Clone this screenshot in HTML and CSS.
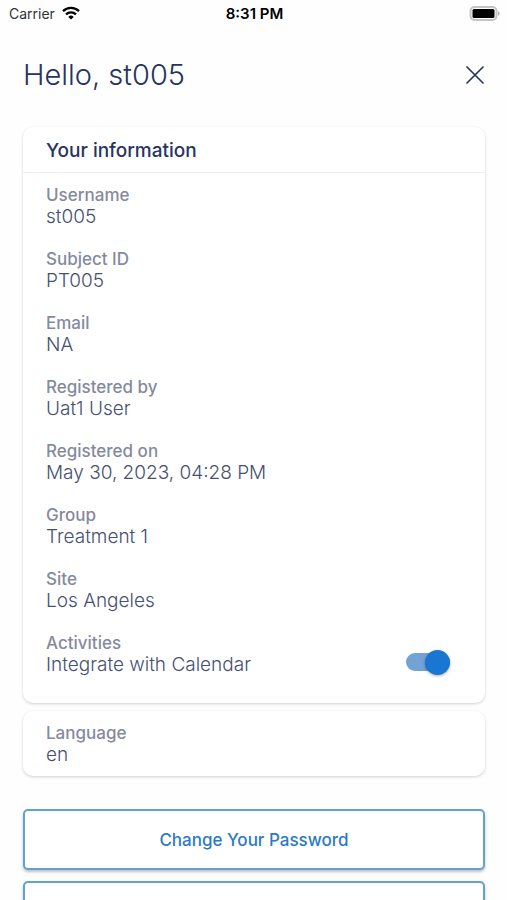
FILE: index.html
```html
<!DOCTYPE html>
<html lang="en">
<head>
  <meta charset="UTF-8">
  <meta name="viewport" content="width=device-width, initial-scale=1.0">
  <title>Profile</title>
  <link rel="stylesheet" href="styles.css">
</head>
<body>
  <div class="status-bar">
    <div class="carrier">
      <span>Carrier</span>
      <svg width="18" height="14" viewBox="0 0 18 14" fill="none" stroke="#000" stroke-width="2.4">
        <path d="M1 5.2a11.4 11.4 0 0 1 16 0"/>
        <path d="M4 8.4a7.2 7.2 0 0 1 10 0"/>
        <path d="M9 13.6 6.3 10.9a3.9 3.9 0 0 1 5.4 0z" fill="#000" stroke="none"/>
      </svg>
    </div>
    <div class="time">8:31 PM</div>
    <div class="battery">
      <svg width="31" height="15" viewBox="0 0 31 15">
        <rect x="1.5" y="1" width="26" height="13" rx="4" fill="#fff" stroke="#c4c4c4" stroke-width="2"/>
        <rect x="3.5" y="3" width="22" height="9" rx="1.5" fill="#000"/>
        <path d="M29 5.2c2.2.8 2.2 3.8 0 4.6z" fill="#b5b5b5"/>
      </svg>
    </div>
  </div>

  <header class="page-header">
    <h1>Hello, st005</h1>
    <button class="close" type="button" aria-label="Close">
      <svg width="20" height="20" viewBox="0 0 20 20" fill="none" stroke="#27345f" stroke-width="1.7" stroke-linecap="round">
        <path d="M2 2l16 16M18 2L2 18"/>
      </svg>
    </button>
  </header>

  <main class="content">
    <section class="card">
      <h2>Your information</h2>
      <dl class="info">
        <div class="item"><dt>Username</dt><dd>st005</dd></div>
        <div class="item"><dt>Subject ID</dt><dd>PT005</dd></div>
        <div class="item"><dt>Email</dt><dd>NA</dd></div>
        <div class="item"><dt>Registered by</dt><dd>Uat1 User</dd></div>
        <div class="item"><dt>Registered on</dt><dd>May 30, 2023, 04:28 PM</dd></div>
        <div class="item"><dt>Group</dt><dd>Treatment 1</dd></div>
        <div class="item"><dt>Site</dt><dd>Los Angeles</dd></div>
        <div class="item item-toggle">
          <dt>Activities</dt>
          <dd>
            <label for="calendar">Integrate with Calendar</label>
            <input class="toggle" type="checkbox" role="switch" id="calendar" checked>
          </dd>
        </div>
      </dl>
    </section>

    <section class="card">
      <dl class="info language">
        <div class="item"><dt>Language</dt><dd>en</dd></div>
      </dl>
    </section>

    <div class="actions">
      <button class="btn" type="button">Change Your Password</button>
      <button class="btn" type="button" aria-label="Log Out"></button>
    </div>
  </main>
</body>
</html>
```

FILE: styles.css
```css
* {
  box-sizing: border-box;
}

body {
  margin: 0;
  height: 100vh;
  overflow: hidden;
  background-color: #fefefe;
  color: #27345f;
  font-family: Inter, "Liberation Sans", sans-serif;
}

h1, h2, dl, dd {
  margin: 0;
}

.status-bar {
  display: grid;
  grid-template-columns: 1fr auto 1fr;
  align-items: center;
  height: 26px;
  padding: 0 7px 0 9px;
  color: #000;
  font-size: 14px;
}

.status-bar svg {
  display: block;
}

.carrier {
  display: flex;
  align-items: center;
  gap: 7px;
  color: #333;
}

.time {
  font-size: 15px;
  font-weight: 600;
}

.battery {
  justify-self: end;
}

.page-header {
  display: flex;
  justify-content: space-between;
  align-items: center;
  height: 97px;
  padding: 0 22px 0 23px;
}

.page-header h1 {
  font-size: 29px;
  font-weight: 300;
}

.close {
  padding: 0;
  border: 0;
  background: none;
}

.close svg {
  display: block;
}

.content {
  display: flex;
  flex-direction: column;
  gap: 8px;
  padding: 4px 22px 0 23px;
}

.card {
  border-radius: 10px;
  background-color: #fff;
  box-shadow: 0 1px 3px rgba(0, 0, 0, 0.18);
}

.card h2 {
  padding: 3px 23px 0;
  border-bottom: 1px solid #f0f0f2;
  font-size: 19px;
  font-weight: 500;
  line-height: 42px;
}

.info {
  display: flex;
  flex-direction: column;
  gap: 22px;
  padding: 12px 23px 28px;
  line-height: 21px;
}

.language {
  padding-bottom: 11px;
}

.item dt {
  color: #858a9d;
  font-size: 17px;
  font-weight: 500;
}

.item dd {
  color: #465073;
  font-size: 19px;
  font-weight: 300;
}

.item-toggle dd {
  display: flex;
  justify-content: space-between;
  align-items: center;
  height: 21px;
  padding-right: 12px;
}

/* switch */
.toggle {
  appearance: none;
  display: flex;
  align-items: center;
  justify-content: flex-end;
  width: 44px;
  height: 18px;
  margin: 0 0 5px;
  border-radius: 9px;
  background-color: #72a3d5;
}

.toggle::before {
  content: "";
  flex: none;
  width: 25px;
  height: 25px;
  border-radius: 50%;
  background-color: #1976d2;
  box-shadow: 0 1px 3px rgba(0, 0, 0, 0.35);
}

.toggle:not(:checked) {
  justify-content: flex-start;
}

.actions {
  display: flex;
  flex-direction: column;
  gap: 11px;
  padding-top: 25px;
}

.btn {
  height: 61px;
  padding: 0 16px;
  border: 2px solid #62a0d6;
  border-radius: 5px;
  background-color: #fff;
  box-shadow: 0 2px 3px rgba(0, 0, 0, 0.25);
  color: #2a7ac4;
  font-family: inherit;
  font-size: 17px;
  font-weight: 500;
}
```
